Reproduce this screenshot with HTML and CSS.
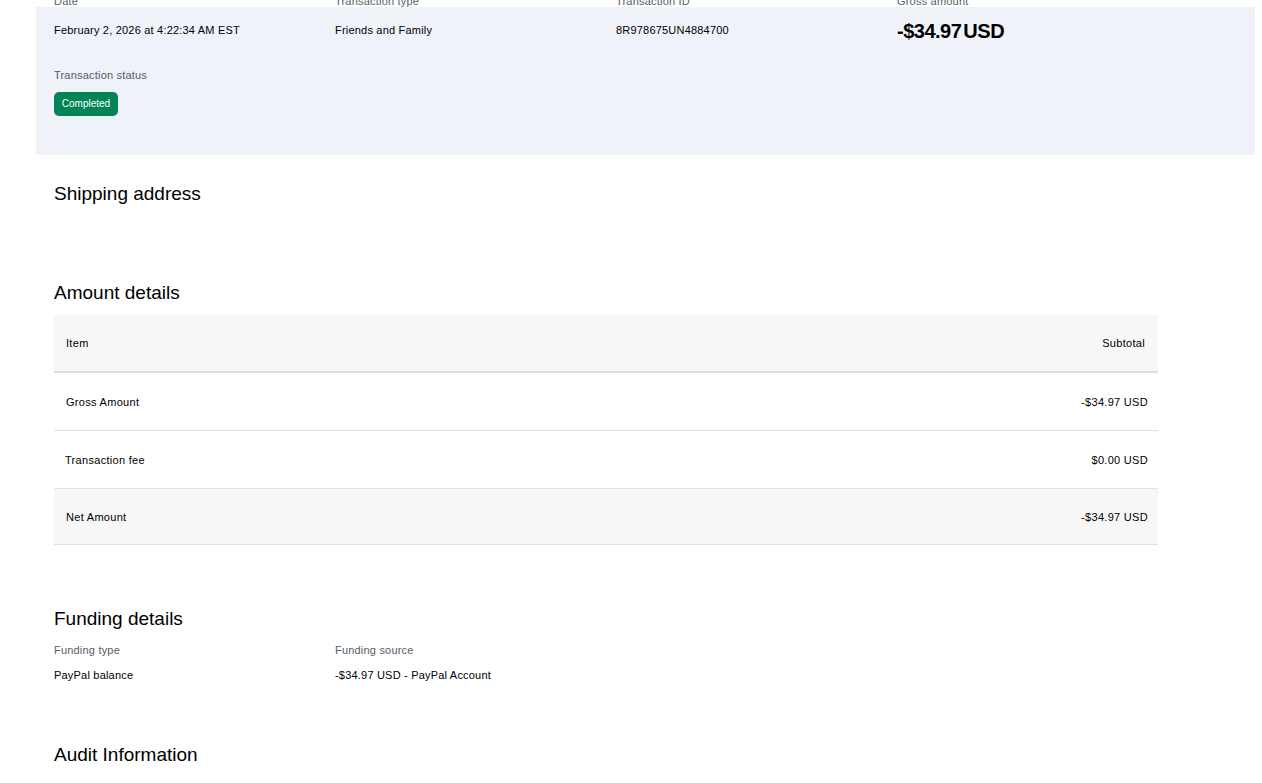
FILE: index.html
```html
<!DOCTYPE html>
<html lang="en">
  <head>
    <meta charset="utf-8">
    <title>Transaction details</title>
    <link rel="stylesheet" href="styles.css">
  </head>
  <body>
    <div class="page">
      <!-- 상단 거래 요약 -->
      <div class="summary">
        <div class="info-grid top-row">
          <div class="field">
            <div class="label">Date</div>
            <div class="value">February 2, 2026 at 4:22:34 AM EST</div>
          </div>
          <div class="field">
            <div class="label">Transaction type</div>
            <div class="value">Friends and Family</div>
          </div>
          <div class="field">
            <div class="label">Transaction ID</div>
            <div class="value">8R978675UN4884700</div>
          </div>
          <div class="field">
            <div class="label">Gross amount</div>
            <div class="value gross">-$34.97<span class="currency">USD</span></div>
          </div>
        </div>
        <div class="status">
          <div class="label">Transaction status</div>
          <span class="badge">Completed</span>
        </div>
      </div>

      <div class="content">
        <h2 class="section-title first">Shipping address</h2>

        <h2 class="section-title amount-title">Amount details</h2>
        <div class="amount-table">
          <div class="row head">
            <span>Item</span>
            <span class="amt">Subtotal</span>
          </div>
          <div class="row">
            <span>Gross Amount</span>
            <span class="amt">-$34.97 USD</span>
          </div>
          <div class="row">
            <span class="fee">Transaction fee</span>
            <span class="amt">$0.00 USD</span>
          </div>
          <div class="row total">
            <span>Net Amount</span>
            <span class="amt">-$34.97 USD</span>
          </div>
        </div>

        <h2 class="section-title funding-title">Funding details</h2>
        <div class="info-grid funding">
          <div class="field">
            <div class="label">Funding type</div>
            <div class="value">PayPal balance</div>
          </div>
          <div class="field">
            <div class="label">Funding source</div>
            <div class="value">-$34.97 USD - PayPal Account</div>
          </div>
        </div>

        <h2 class="section-title audit-title">Audit Information</h2>
      </div>
    </div>
  </body>
</html>
```

FILE: styles.css
```css
body {
  margin: 0;
  font-family: "Liberation Sans", Arial, sans-serif;
  color: #000;
  background: #fff;
}
.page {
  padding-top: 7px;
  height: 776px;
  overflow: hidden;
}
/* 상단 요약 박스 */
.summary {
  background: #eff2f9;
  margin: 0 7px 0 36px;
  padding: 1px 18px 39px;
}
.info-grid {
  display: grid;
  grid-template-columns: repeat(4, 281px);
}
.top-row {
  margin-top: -15px;
}
.top-row .value {
  margin-top: 13px;
}
.label {
  font-size: 11px;
  line-height: 16px;
  letter-spacing: 0.2px;
  color: #545d68;
}
.value {
  font-size: 11px;
  line-height: 16px;
  letter-spacing: 0.2px;
  margin-top: 10px;
  color: #000;
}
.top-row .gross {
  font-size: 20px;
  font-weight: bold;
  line-height: 16px;
  margin-top: 14px;
  letter-spacing: -0.5px;
}
.currency {
  margin-left: 2px;
}
.status {
  margin-top: 28px;
}
.badge {
  display: inline-block;
  margin-top: 9px;
  height: 24px;
  line-height: 24px;
  padding: 0 6px;
  width: 52px;
  text-align: center;
  border-radius: 5px;
  background: #028556;
  color: #fff;
  font-size: 10px;
}
/* 본문 */
.content {
  padding-left: 54px;
  width: 1104px;
}
.section-title {
  margin: 0;
  font-size: 19px;
  font-weight: normal;
  line-height: 24px;
}
.first {
  margin-top: 27px;
}
.amount-title {
  margin-top: 75px;
}
.funding-title {
  margin-top: 62px;
}
.audit-title {
  margin-top: 60px;
}
/* 금액 표 */
.amount-table {
  margin-top: 10px;
  font-size: 11px;
  letter-spacing: 0.3px;
}
.row {
  display: flex;
  justify-content: space-between;
  align-items: center;
  height: 57px;
  padding: 0 10px 0 12px;
  border-bottom: 1px solid #e2e2e2;
}
.row.head {
  height: 56px;
  padding-right: 13px;
  background: #f7f7f7;
  border-bottom: 2px solid #dedede;
}
.row.total {
  height: 55px;
  background: #f7f7f7;
}
.fee {
  margin-left: -1px;
}
/* 결제 수단 */
.funding {
  margin-top: 11px;
}
.funding .value {
  margin-top: 9px;
}
```
